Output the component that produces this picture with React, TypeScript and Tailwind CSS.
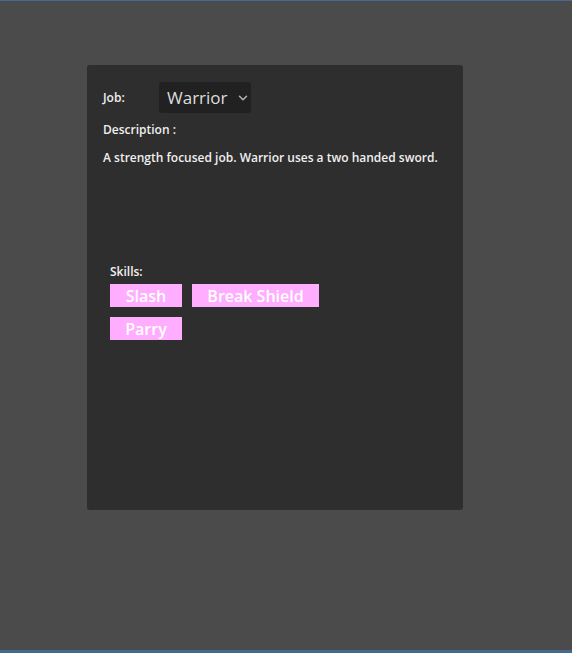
import React from "react";
import { ChevronDown } from "lucide-react";

const skills = ["Slash", "Break Shield", "Parry"];

export default function App() {
  return (
    <div
      className="h-[653px] w-[572px] bg-[#4b4b4b] border-t border-b-[3px] border-[#46698f] overflow-hidden"
      style={{ fontFamily: '"Open Sans", "Noto Sans", sans-serif' }}
    >
      <div className="ml-[87px] mt-[64px] w-[376px] h-[445px] rounded-[3px] bg-[#2e2e2e] px-4 pt-[17px] text-[#f0f0f0]">
        <div className="flex items-center">
          <span className="w-[56px] text-[12px] font-semibold">Job:</span>
          <div className="flex h-[31px] w-[92px] items-center gap-[8px] rounded-[3px] bg-[#212121] pl-[8px] text-[17px] text-[#dedede]">
            Warrior
            <ChevronDown className="h-[14px] w-[14px] text-[#b5b5b5]" strokeWidth={2.5} />
          </div>
        </div>
        <div className="mt-[8px] text-[12px] font-semibold">Description :</div>
        <p className="mt-[10px] text-[12px] font-semibold">
          A strength focused job. Warrior uses a two handed sword.
        </p>
        <div className="mt-[96px] px-[7px]">
          <div className="text-[12px] font-semibold">Skills:</div>
          <div className="mt-[3px] flex flex-wrap gap-[10px] w-[230px]">
            {skills.map((s) => (
              <span
                key={s}
                className="flex h-[23px] w-[72px] items-center justify-center bg-[#ffaeff] text-[16px] font-semibold text-white [&:nth-child(2)]:w-[127px]"
              >
                {s}
              </span>
            ))}
          </div>
        </div>
      </div>
    </div>
  );
}
